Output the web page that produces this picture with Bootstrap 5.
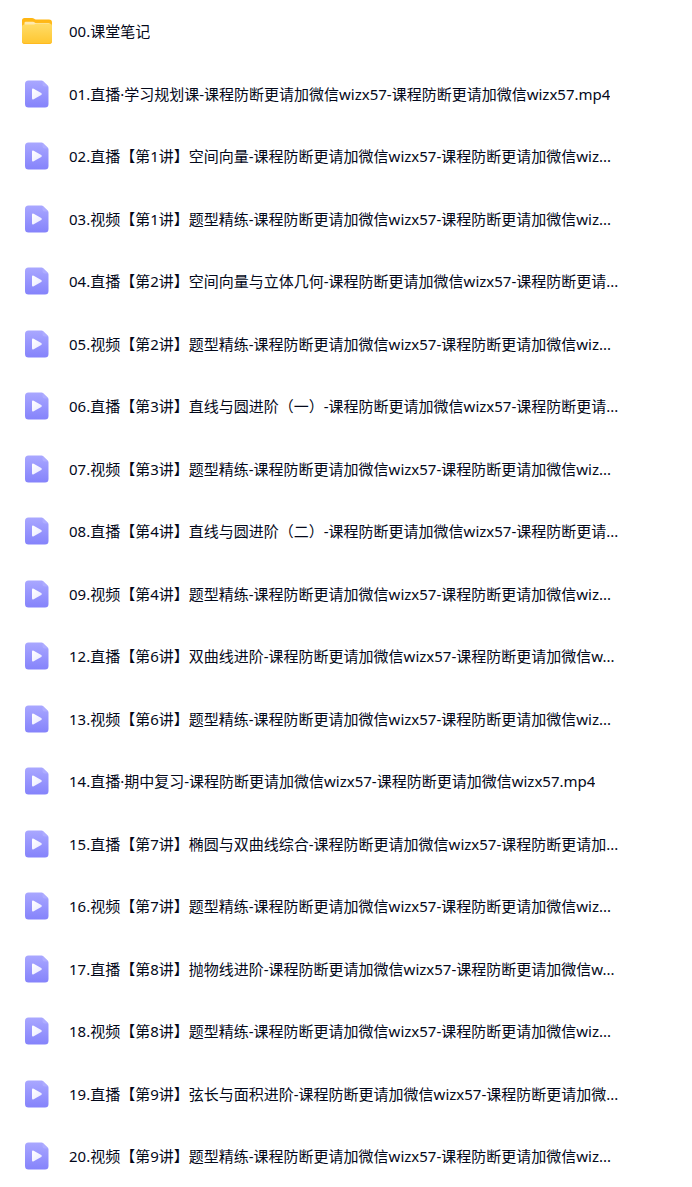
<!DOCTYPE html>
<html lang="zh-CN">
<head>
<meta charset="utf-8">
<meta name="viewport" content="width=device-width, initial-scale=1">
<title>课程文件</title>
<link href="https://cdn.jsdelivr.net/npm/bootstrap@5.3.0/dist/css/bootstrap.min.css" rel="stylesheet">
<style>
body{font-family:"Noto Sans","Noto Sans CJK SC",sans-serif;font-size:15px;line-height:22px;color:#03081a;background:#fff}
.file-list{display:grid;grid-template-columns:minmax(0,1fr);grid-auto-rows:minmax(62px,auto) minmax(63px,auto)}
.file-row{gap:16px;padding:0 20px}
.file-icon{width:33px;height:30px}
</style>
</head>
<body>
<svg width="0" height="0" class="position-absolute" aria-hidden="true">
  <defs>
    <linearGradient id="folderBack" x1="0" y1="0" x2="0" y2="1"><stop offset="0" stop-color="#ffb50f"/><stop offset="1" stop-color="#ffc53a"/></linearGradient>
    <linearGradient id="folderFront" x1="0" y1="0" x2="0" y2="1"><stop offset="0" stop-color="#ffdc68"/><stop offset="1" stop-color="#ffc62f"/></linearGradient>
    <linearGradient id="videoPage" x1="0" y1="0" x2="0" y2="1"><stop offset="0" stop-color="#a9a7ff"/><stop offset="1" stop-color="#8583fb"/></linearGradient>
    <linearGradient id="playMark" x1="0" y1="0" x2="1" y2="1"><stop offset="0" stop-color="#fff"/><stop offset="1" stop-color="#e9e8ff"/></linearGradient>
    <symbol id="folder" viewBox="0 0 33 30">
      <path d="M2 4.500A2.500 2.500 0 0 1 4.500 2H12q1.300 0 2.200.8L15 3.200q.6.300 1.500.3H29A3 3 0 0 1 32 6.500V20H2z" fill="url(#folderBack)"/>
      <path d="M4.500 7q0-1.200 1.200-1.200h7.300q1 0 1.700.6.700.6 1.700.6H28.500q1.500 0 1.500 1.500V12H4.500z" fill="#ffe9ae"/>
      <path d="M2 11q0-2.500 2.500-2.500H13q1.200 0 2-.5t2-.5H29Q32 7.500 32 10V25a3 3 0 0 1-3 3H5a3 3 0 0 1-3-3z" fill="url(#folderFront)"/>
      <path d="M2 24.500V25a3 3 0 0 0 3 3h24a3 3 0 0 0 3-3v-.5q-.5 2.500-3 2.500H5q-2.500 0-3-2.500z" fill="#ffba20"/>
    </symbol>
    <symbol id="video" viewBox="0 0 33 30">
      <path d="M8.500 1.500H21.500q1 0 1.700.7L27.800 6.800q.7.700.7 1.700V25a3.500 3.500 0 0 1-3.500 3.500H8.500A3.500 3.500 0 0 1 5 25V5a3.500 3.500 0 0 1 3.500-3.500z" fill="url(#videoPage)"/>
      <path d="M22.500 1.700L28.300 7.500H24.500a2 2 0 0 1-2-2z" fill="#aeacff"/>
      <path d="M12 10.800q0-1.900 1.700-1.100l7.500 4.300q1.500 1 0 2l-7.500 4.300q-1.700.8-1.700-1.100z" fill="url(#playMark)"/>
    </symbol>
  </defs>
</svg>
<main>
<ul class="file-list list-unstyled mb-0">
<li class="file-row d-flex align-items-center"><svg class="file-icon flex-shrink-0" aria-hidden="true"><use href="#folder"/></svg><span class="text-truncate">00.课堂笔记</span></li>
<li class="file-row d-flex align-items-center"><svg class="file-icon flex-shrink-0" aria-hidden="true"><use href="#video"/></svg><span class="text-truncate">01.直播·学习规划课-课程防断更请加微信wizx57-课程防断更请加微信wizx57.mp4</span></li>
<li class="file-row d-flex align-items-center"><svg class="file-icon flex-shrink-0" aria-hidden="true"><use href="#video"/></svg><span class="text-truncate">02.直播【第1讲】空间向量-课程防断更请加微信wizx57-课程防断更请加微信wiz...</span></li>
<li class="file-row d-flex align-items-center"><svg class="file-icon flex-shrink-0" aria-hidden="true"><use href="#video"/></svg><span class="text-truncate">03.视频【第1讲】题型精练-课程防断更请加微信wizx57-课程防断更请加微信wiz...</span></li>
<li class="file-row d-flex align-items-center"><svg class="file-icon flex-shrink-0" aria-hidden="true"><use href="#video"/></svg><span class="text-truncate">04.直播【第2讲】空间向量与立体几何-课程防断更请加微信wizx57-课程防断更请...</span></li>
<li class="file-row d-flex align-items-center"><svg class="file-icon flex-shrink-0" aria-hidden="true"><use href="#video"/></svg><span class="text-truncate">05.视频【第2讲】题型精练-课程防断更请加微信wizx57-课程防断更请加微信wiz...</span></li>
<li class="file-row d-flex align-items-center"><svg class="file-icon flex-shrink-0" aria-hidden="true"><use href="#video"/></svg><span class="text-truncate">06.直播【第3讲】直线与圆进阶（一）-课程防断更请加微信wizx57-课程防断更请...</span></li>
<li class="file-row d-flex align-items-center"><svg class="file-icon flex-shrink-0" aria-hidden="true"><use href="#video"/></svg><span class="text-truncate">07.视频【第3讲】题型精练-课程防断更请加微信wizx57-课程防断更请加微信wiz...</span></li>
<li class="file-row d-flex align-items-center"><svg class="file-icon flex-shrink-0" aria-hidden="true"><use href="#video"/></svg><span class="text-truncate">08.直播【第4讲】直线与圆进阶（二）-课程防断更请加微信wizx57-课程防断更请...</span></li>
<li class="file-row d-flex align-items-center"><svg class="file-icon flex-shrink-0" aria-hidden="true"><use href="#video"/></svg><span class="text-truncate">09.视频【第4讲】题型精练-课程防断更请加微信wizx57-课程防断更请加微信wiz...</span></li>
<li class="file-row d-flex align-items-center"><svg class="file-icon flex-shrink-0" aria-hidden="true"><use href="#video"/></svg><span class="text-truncate">12.直播【第6讲】双曲线进阶-课程防断更请加微信wizx57-课程防断更请加微信w...</span></li>
<li class="file-row d-flex align-items-center"><svg class="file-icon flex-shrink-0" aria-hidden="true"><use href="#video"/></svg><span class="text-truncate">13.视频【第6讲】题型精练-课程防断更请加微信wizx57-课程防断更请加微信wiz...</span></li>
<li class="file-row d-flex align-items-center"><svg class="file-icon flex-shrink-0" aria-hidden="true"><use href="#video"/></svg><span class="text-truncate">14.直播·期中复习-课程防断更请加微信wizx57-课程防断更请加微信wizx57.mp4</span></li>
<li class="file-row d-flex align-items-center"><svg class="file-icon flex-shrink-0" aria-hidden="true"><use href="#video"/></svg><span class="text-truncate">15.直播【第7讲】椭圆与双曲线综合-课程防断更请加微信wizx57-课程防断更请加...</span></li>
<li class="file-row d-flex align-items-center"><svg class="file-icon flex-shrink-0" aria-hidden="true"><use href="#video"/></svg><span class="text-truncate">16.视频【第7讲】题型精练-课程防断更请加微信wizx57-课程防断更请加微信wiz...</span></li>
<li class="file-row d-flex align-items-center"><svg class="file-icon flex-shrink-0" aria-hidden="true"><use href="#video"/></svg><span class="text-truncate">17.直播【第8讲】抛物线进阶-课程防断更请加微信wizx57-课程防断更请加微信w...</span></li>
<li class="file-row d-flex align-items-center"><svg class="file-icon flex-shrink-0" aria-hidden="true"><use href="#video"/></svg><span class="text-truncate">18.视频【第8讲】题型精练-课程防断更请加微信wizx57-课程防断更请加微信wiz...</span></li>
<li class="file-row d-flex align-items-center"><svg class="file-icon flex-shrink-0" aria-hidden="true"><use href="#video"/></svg><span class="text-truncate">19.直播【第9讲】弦长与面积进阶-课程防断更请加微信wizx57-课程防断更请加微...</span></li>
<li class="file-row d-flex align-items-center"><svg class="file-icon flex-shrink-0" aria-hidden="true"><use href="#video"/></svg><span class="text-truncate">20.视频【第9讲】题型精练-课程防断更请加微信wizx57-课程防断更请加微信wiz...</span></li>
</ul>
</main>
<script src="https://cdn.jsdelivr.net/npm/bootstrap@5.3.0/dist/js/bootstrap.bundle.min.js"></script>
</body>
</html>
